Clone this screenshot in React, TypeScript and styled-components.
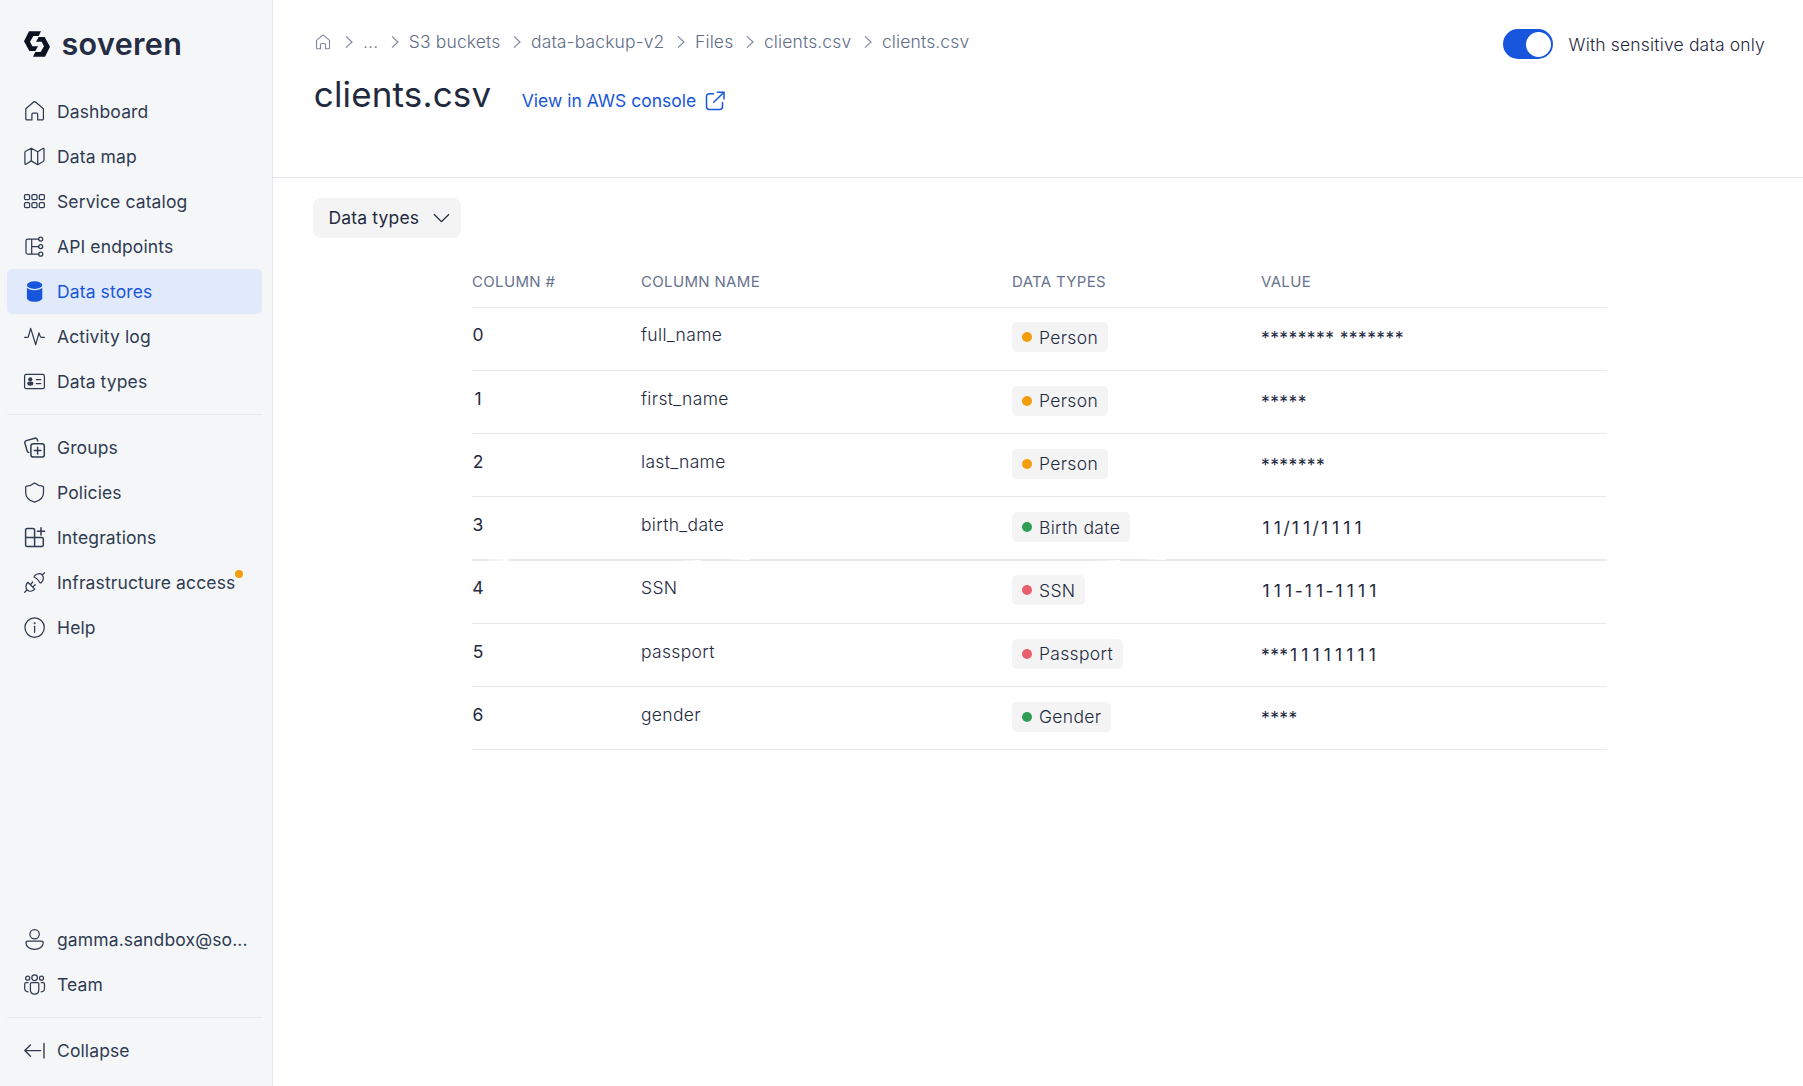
import React from 'react';
import styled, { createGlobalStyle, css } from 'styled-components';

const color = {
  ink: '#1f2a3f',
  nav: '#2f3b52',
  primary: '#1756dc',
  line: '#e6eaf0',
  panel: '#f5f6f8',
  chip: '#f4f4f4',
};

const GlobalStyle = createGlobalStyle`
  *, *::before, *::after { box-sizing: border-box; }
  body {
    margin: 0;
    background: #fff;
    color: ${color.ink};
    font-family: Inter, "Open Sans", sans-serif;
    font-size: 17.5px;
  }
`;

const Page = styled.div`
  display: flex;
  height: 1086px;
  overflow: hidden;
`;

/* ---------- Sidebar ---------- */

const Sidebar = styled.aside`
  display: flex;
  flex-direction: column;
  flex: none;
  width: 273px;
  padding: 0 10px 13px 7px;
  background: ${color.panel};
  border-right: 1px solid #e2e8f4;
`;

const Brand = styled.div`
  display: flex;
  align-items: center;
  height: 89px;
  padding: 0 0 1px 17px;
`;

const BrandMark = styled.svg`
  flex: none;
  width: 26px;
  height: 26px;
  fill: #0b1220;
`;

const BrandName = styled.span`
  margin-left: 11.5px;
  font-size: 30.5px;
  font-weight: 600;
  line-height: 40px;
  letter-spacing: 0.35px;
  color: #242d44;
`;

const Nav = styled.nav`
  display: flex;
  flex-direction: column;
`;

const BottomNav = styled(Nav)`
  margin-top: auto;
`;

const NavItem = styled.a<{ $active?: boolean }>`
  display: flex;
  align-items: center;
  gap: 10px;
  height: 45px;
  padding: 0 15px;
  border-radius: 5px;
  color: ${(p) => (p.$active ? color.primary : color.nav)};
  background: ${(p) => (p.$active ? '#e1eafb' : 'transparent')};
`;

const NavIcon = styled.svg`
  flex: none;
  width: 25px;
  height: 25px;
  fill: none;
  stroke: currentColor;
  stroke-width: 1.25;
  stroke-linecap: round;
  stroke-linejoin: round;
`;

const NavLabel = styled.span`
  position: relative;
  line-height: 24px;
  letter-spacing: 0.12px;
  white-space: nowrap;
`;

const Alert = styled.i`
  position: absolute;
  top: -1px;
  right: -8px;
  width: 8px;
  height: 8px;
  border-radius: 50%;
  background: #f59e0b;
`;

const Divider = styled.hr`
  width: 100%;
  height: 1px;
  margin: 10px 0;
  border: 0;
  background: #e4e8ef;
`;

/* ---------- Header ---------- */

const Main = styled.main`
  flex: 1;
  min-width: 0;
`;

const Header = styled.header`
  display: flex;
  justify-content: space-between;
  align-items: flex-start;
  height: 178px;
  padding: 29px 38px 0 40px;
  border-bottom: 1px solid #e5e7eb;
`;

const Crumbs = styled.div`
  display: flex;
  align-items: center;
  height: 26px;
  font-weight: 300;
  color: #5f6d87;
`;

const Crumb = styled.span`
  line-height: 26px;
  letter-spacing: 0.13px;
  white-space: nowrap;
`;

const HomeIcon = styled.svg`
  width: 20px;
  height: 20px;
  margin-right: -0.6px;
  fill: none;
  stroke: #7d89a0;
  stroke-width: 1.1;
  stroke-linejoin: round;
  stroke-linecap: round;
`;

const CrumbArrow = styled.svg`
  width: 8px;
  height: 14px;
  margin: 0 10.3px 0 12.3px;
  fill: none;
  stroke: #7d89a0;
  stroke-width: 1.2;
`;

const TitleRow = styled.div`
  display: flex;
  align-items: baseline;
  margin-top: 17px;
`;

const Title = styled.h1`
  margin: 0 0 0 0.8px;
  font-size: 35px;
  font-weight: 400;
  line-height: 44px;
  letter-spacing: 0.15px;
`;

const ConsoleLink = styled.a`
  display: flex;
  align-items: center;
  margin-left: 30.5px;
  line-height: 24px;
  color: ${color.primary};
`;

const LinkIcon = styled.svg`
  width: 20px;
  height: 20px;
  margin-left: 8.5px;
  fill: none;
  stroke: currentColor;
  stroke-width: 1.5;
  stroke-linecap: round;
  stroke-linejoin: round;
`;

const ToggleField = styled.label`
  display: flex;
  align-items: center;
  font-weight: 300;
  letter-spacing: 0.17px;
`;

const Track = styled.span`
  display: flex;
  justify-content: flex-end;
  width: 50px;
  height: 30px;
  margin-right: 15.5px;
  padding: 3px 2px 2px;
  border-radius: 15px;
  background: ${color.primary};
`;

const Knob = styled.span`
  width: 25px;
  height: 25px;
  border-radius: 50%;
  background: #fff;
`;

/* ---------- Content ---------- */

const Content = styled.section`
  padding: 20px 196px 0 40px;
`;

const FilterButton = styled.button`
  display: flex;
  align-items: center;
  justify-content: space-between;
  width: 148px;
  height: 40px;
  padding: 0 11px 1px 15.5px;
  border: 0;
  border-radius: 8px;
  background: ${color.chip};
  color: ${color.ink};
  font: inherit;
  letter-spacing: 0.17px;
`;

const ChevronDown = styled.svg`
  width: 17px;
  height: 10px;
  fill: none;
  stroke: currentColor;
  stroke-width: 1.3;
`;

const Table = styled.div`
  margin-left: 159px;
`;

const rowGrid = css`
  display: grid;
  grid-template-columns: 169px 371px 249px 1fr;
`;

const HeadRow = styled.div`
  ${rowGrid}
  height: 69.5px;
  padding-top: 31px;
  border-bottom: 1px solid ${color.line};
  font-size: 15px;
  line-height: 25px;
  letter-spacing: 0.33px;
  color: #66738d;
`;

const Row = styled.div`
  ${rowGrid}
  position: relative;
  height: 63.25px;
  padding-top: 14.75px;
  border-bottom: 1px solid ${color.line};
  font-weight: 300;
  line-height: 25px;
  letter-spacing: 0.33px;
`;

/* Two-pixel rule with short faded gaps. */
const BrokenRule = styled.i`
  position: absolute;
  left: 0;
  right: 0;
  bottom: -1px;
  height: 2px;
  background:
    linear-gradient(90deg, transparent, #fff) 13px 0 / 23px 2px no-repeat,
    linear-gradient(90deg, transparent, #fff) 208px 1px / 21px 1px no-repeat,
    linear-gradient(90deg, transparent, #fff) 256px 0 / 22px 1px no-repeat,
    linear-gradient(90deg, transparent, #fff) 626px 1px / 22px 1px no-repeat,
    linear-gradient(90deg, transparent, #fff) 672px 0 / 22px 1px no-repeat,
    #e6eaf1;
`;

const IndexCell = styled.span`
  width: 12px;
  font-weight: 400;
  letter-spacing: 0;
  text-align: center;
`;

const NameCell = styled.span``;

const Badge = styled.span`
  display: inline-flex;
  align-items: center;
  justify-self: start;
  height: 30px;
  padding: 0 9.7px 0 10px;
  border-radius: 5px;
  background: ${color.chip};
`;

const Dot = styled.i<{ $tone: string }>`
  width: 10px;
  height: 10px;
  margin-right: 7px;
  border-radius: 50%;
  background: ${(p) => p.$tone};
`;

const ValueCell = styled.span`
  font-weight: 400;
  line-height: 31px;
  letter-spacing: 0.4px;
`;

const Digits = styled.span`
  padding-left: 1.6px;
  margin-right: -1.6px;
  letter-spacing: 4.1px;
`;

const icons: Record<string, React.ReactNode> = {
  home: <path d="M3.8 9.8 11.3 3.3a2 2 0 0 1 2.6 0l7.5 6.5v9.9a1.2 1.2 0 0 1-1.2 1.2h-4.5v-5.5a1.3 1.3 0 0 0-1.3-1.3h-3.2a1.3 1.3 0 0 0-1.3 1.3v5.5H5a1.2 1.2 0 0 1-1.2-1.2z" />,
  map: <path d="M9.3 4.2 3.6 7.3a1.2 1.2 0 0 0-.7 1.1v11.2c0 .7.6 1 1.1.7l5.3-3.4 6.4 3.8 5.4-3.2a1.5 1.5 0 0 0 .9-1.4V5c0-.6-.6-.9-1.1-.6l-5.2 3.4zM9.3 4.2v12.7M15.7 7.8v12.9" />,
  catalog: (
    <>
      {[2.5, 9.9, 17.3].map((x) =>
        [5.6, 13.5].map((y) => <rect key={`${x}-${y}`} x={x} y={y} width="5.1" height="5.1" rx="1.2" />),
      )}
    </>
  ),
  api: (
    <>
      <path d="M16.7 5H5.8A1.8 1.8 0 0 0 4 6.8V18.4a1.8 1.8 0 0 0 1.8 1.8h10.9M9.7 5v15.2M9.7 12.5h7" />
      <circle cx="18.7" cy="5" r="2" />
      <circle cx="18.7" cy="12.5" r="2" />
      <circle cx="18.7" cy="20.2" r="2" />
    </>
  ),
  stores: (
    <g fill="currentColor" stroke="none">
      <ellipse cx="12.6" cy="6.1" rx="7.7" ry="3.8" />
      <path d="M4.9 8.7c1.4 1.6 4.3 2.5 7.7 2.5s6.3-.9 7.7-2.5v10.300c0 2.100-3.400 3.800-7.700 3.800s-7.700-1.700-7.700-3.800z" />
    </g>
  ),
  activity: <path d="M2.6 13.3h2.8c.5 0 .8-.3 1-.8L8.7 4.400l5 16.300L17 8.900l1.200 3.500c.2.600.5.900 1.100.9h3.100" />,
  types: (
    <>
      <rect x="2.6" y="5.4" width="19.8" height="14.3" rx="1.8" />
      <g fill="currentColor" stroke="none">
        <circle cx="8.3" cy="10.4" r="2.1" />
        <path d="M5.2 14.300c0-1 .7-1.600 1.600-1.600h3c.9 0 1.600.6 1.600 1.600 0 1.700-1.200 2.500-3.100 2.500s-3.100-.8-3.100-2.500z" />
      </g>
      <path d="M14.3 10.500h4.500M14.300 14.600h4.500" />
    </>
  ),
  groups: (
    <g strokeWidth="1.5">
      <rect x="8.9" y="8.7" width="13.4" height="13.4" rx="2.4" />
      <path d="M15.600 12.300v6.600M12.300 15.600h6.600M6.700 17.600a2 2 0 0 1-1.500-1.500L2.900 8.100a2 2 0 0 1 1.400-2.500l8.500-2.400a2 2 0 0 1 2.500 1.400l.4 1.300" />
    </g>
  ),
  policies: <path d="M12.600 2.900c2.500 1.900 5.200 2.900 8 3.200.6.100.9.400.9.900v5.500c0 4.700-3.400 8.100-8.900 9.700-5.500-1.600-8.900-5-8.900-9.700V7c0-.5.3-.8.9-.9 2.800-.3 5.500-1.300 8-3.200z" />,
  integrations: (
    <path strokeWidth="1.5" d="M12.600 12.500V5a1.600 1.600 0 0 0-1.600-1.600H5.200A1.600 1.600 0 0 0 3.600 5v14.900a1.600 1.600 0 0 0 1.600 1.600h14.500a1.600 1.600 0 0 0 1.600-1.600v-5.800a1.600 1.600 0 0 0-1.600-1.600H3.600M12.600 12.500v9M19 2.700v7.200M15.400 6.300h7.200" />
  ),
  plug: (
    <path d="M2.700 22.300l2.300-2.300M5.900 12.300l6.800 6.800c-2.200 2.300-5.400 2.700-7.400.9-2-2-1.800-5.300.6-7.700zM8.700 14.500l2-2.500M10.900 16.900l2.300-2.200M22.500 2.700l-2.300 2.300M12.400 5.900c2.200-2.300 5.800-3 7.800-.9s1.400 5.500-1 7.700c-.5.5-1.200.3-1.400-.2-1.100-2.300-2.900-4-5.200-5.200-.6-.3-.6-1-.2-1.400z" />
  ),
  help: (
    <>
      <circle cx="12.6" cy="12.6" r="9.7" />
      <path d="M12.600 11.300v6" />
      <circle cx="12.6" cy="8.3" r=".4" fill="currentColor" />
    </>
  ),
  user: (
    <>
      <circle cx="12.6" cy="7.2" r="4.7" />
      <path d="M6 14.200h13.200c1.200 0 2 .7 2 1.800 0 3.800-3.600 6.300-8.600 6.300S4 19.800 4 16c0-1.100.8-1.800 2-1.800z" />
    </>
  ),
  team: (
    <>
      <circle cx="5.7" cy="6.2" r="2" />
      <circle cx="12.6" cy="5.7" r="2.8" />
      <circle cx="19.5" cy="6.2" r="2" />
      <path d="M9.500 10.600h6.200c.7 0 1.100.4 1.100 1.100v5.800c0 2.700-1.600 4.600-4.200 4.600s-4.200-1.900-4.200-4.600v-5.800c0-.7.400-1.100 1.100-1.100zM6 10.600H4A1.300 1.300 0 0 0 2.700 11.900v4.400c0 2.100 1.300 3.500 3.400 3.500M19.200 10.600h2a1.300 1.300 0 0 1 1.300 1.300v4.400c0 2.100-1.300 3.500-3.400 3.500" />
    </>
  ),
  collapse: <path strokeWidth="1.4" d="M18.600 12.600H2.900M8.500 7l-5.700 5.600 5.700 5.700M22 5.500v14.400" />,
};

type NavEntry = { icon: string; label: string; active?: boolean; alert?: boolean };

const primaryNav: NavEntry[] = [
  { icon: 'home', label: 'Dashboard' },
  { icon: 'map', label: 'Data map' },
  { icon: 'catalog', label: 'Service catalog' },
  { icon: 'api', label: 'API endpoints' },
  { icon: 'stores', label: 'Data stores', active: true },
  { icon: 'activity', label: 'Activity log' },
  { icon: 'types', label: 'Data types' },
];

const secondaryNav: NavEntry[] = [
  { icon: 'groups', label: 'Groups' },
  { icon: 'policies', label: 'Policies' },
  { icon: 'integrations', label: 'Integrations' },
  { icon: 'plug', label: 'Infrastructure access', alert: true },
  { icon: 'help', label: 'Help' },
];

const accountNav: NavEntry[] = [
  { icon: 'user', label: 'gamma.sandbox@so...' },
  { icon: 'team', label: 'Team' },
];

const crumbs = ['...', 'S3 buckets', 'data-backup-v2', 'Files', 'clients.csv', 'clients.csv'];

const amber = '#f49d0c';
const green = '#2f9e54';
const red = '#e85f6b';

const rows = [
  { name: 'full_name', type: 'Person', tone: amber, value: '******** *******' },
  { name: 'first_name', type: 'Person', tone: amber, value: '*****' },
  { name: 'last_name', type: 'Person', tone: amber, value: '*******' },
  { name: 'birth_date', type: 'Birth date', tone: green, value: '11/11/1111', broken: true },
  { name: 'SSN', type: 'SSN', tone: red, value: '111-11-1111' },
  { name: 'passport', type: 'Passport', tone: red, value: '***11111111' },
  { name: 'gender', type: 'Gender', tone: green, value: '****' },
];

function Entry({ icon, label, active, alert }: NavEntry) {
  return (
    <NavItem $active={active}>
      <NavIcon viewBox="0 0 25 25">{icons[icon]}</NavIcon>
      <NavLabel>
        {label}
        {alert && <Alert />}
      </NavLabel>
    </NavItem>
  );
}

/* Digits are widely tracked; masks and separators stay tight. */
function Value({ text }: { text: string }) {
  return (
    <ValueCell>
      {text.split(/(\d+)/).map((part, i) => (/\d/.test(part) ? <Digits key={i}>{part}</Digits> : part))}
    </ValueCell>
  );
}

export default function App() {
  return (
    <Page>
      <GlobalStyle />
      <Sidebar>
        <Brand>
          <BrandMark viewBox="72 93 78 78">
            <path d="M87 94H123L116 108H100L90 125 97 139H114L106 153H88L72 124z" />
            <path d="M135 170H99L106 156H122L132 139 125 125H108L116 111H134L150 140z" />
          </BrandMark>
          <BrandName>soveren</BrandName>
        </Brand>
        <Nav>
          {primaryNav.map((n) => (
            <Entry key={n.label} {...n} />
          ))}
        </Nav>
        <Divider />
        <Nav>
          {secondaryNav.map((n) => (
            <Entry key={n.label} {...n} />
          ))}
        </Nav>
        <BottomNav>
          {accountNav.map((n) => (
            <Entry key={n.label} {...n} />
          ))}
          <Divider />
          <Entry icon="collapse" label="Collapse" />
        </BottomNav>
      </Sidebar>

      <Main>
        <Header>
          <div>
            <Crumbs>
              <HomeIcon viewBox="0 0 20 20">
                <path d="M3.500 8.300 9 3.600a1.500 1.500 0 0 1 2 0l5.500 4.700v7.400a1 1 0 0 1-1 1h-3v-4a1.200 1.200 0 0 0-1.200-1.200H8.700a1.200 1.200 0 0 0-1.200 1.200v4h-3a1 1 0 0 1-1-1z" />
              </HomeIcon>
              {crumbs.map((c, i) => (
                <React.Fragment key={i}>
                  <CrumbArrow viewBox="0 0 8 14">
                    <path d="M1 1.400 7 7l-6 5.600" />
                  </CrumbArrow>
                  <Crumb>{c}</Crumb>
                </React.Fragment>
              ))}
            </Crumbs>
            <TitleRow>
              <Title>clients.csv</Title>
              <ConsoleLink>
                View in AWS console
                <LinkIcon viewBox="0 0 20 20">
                  <path d="M8.500 2.700H4.200A2.700 2.700 0 0 0 1.500 5.400v10.400a2.700 2.700 0 0 0 2.700 2.700h10.600a2.700 2.700 0 0 0 2.700-2.700v-4.300M8.700 11.300 19 1.300M12.300 1.300H19V8" />
                </LinkIcon>
              </ConsoleLink>
            </TitleRow>
          </div>
          <ToggleField>
            <Track>
              <Knob />
            </Track>
            With sensitive data only
          </ToggleField>
        </Header>

        <Content>
          <FilterButton>
            Data types
            <ChevronDown viewBox="0 0 17 10">
              <path d="M1 1.300l7.500 7.400L16 1.300" />
            </ChevronDown>
          </FilterButton>
          <Table>
            <HeadRow>
              <span>COLUMN #</span>
              <span>COLUMN NAME</span>
              <span>DATA TYPES</span>
              <span>VALUE</span>
            </HeadRow>
            {rows.map((r, i) => (
              <Row key={r.name}>
                <IndexCell>{i}</IndexCell>
                <NameCell>{r.name}</NameCell>
                <Badge>
                  <Dot $tone={r.tone} />
                  {r.type}
                </Badge>
                <Value text={r.value} />
                {r.broken && <BrokenRule />}
              </Row>
            ))}
          </Table>
        </Content>
      </Main>
    </Page>
  );
}
